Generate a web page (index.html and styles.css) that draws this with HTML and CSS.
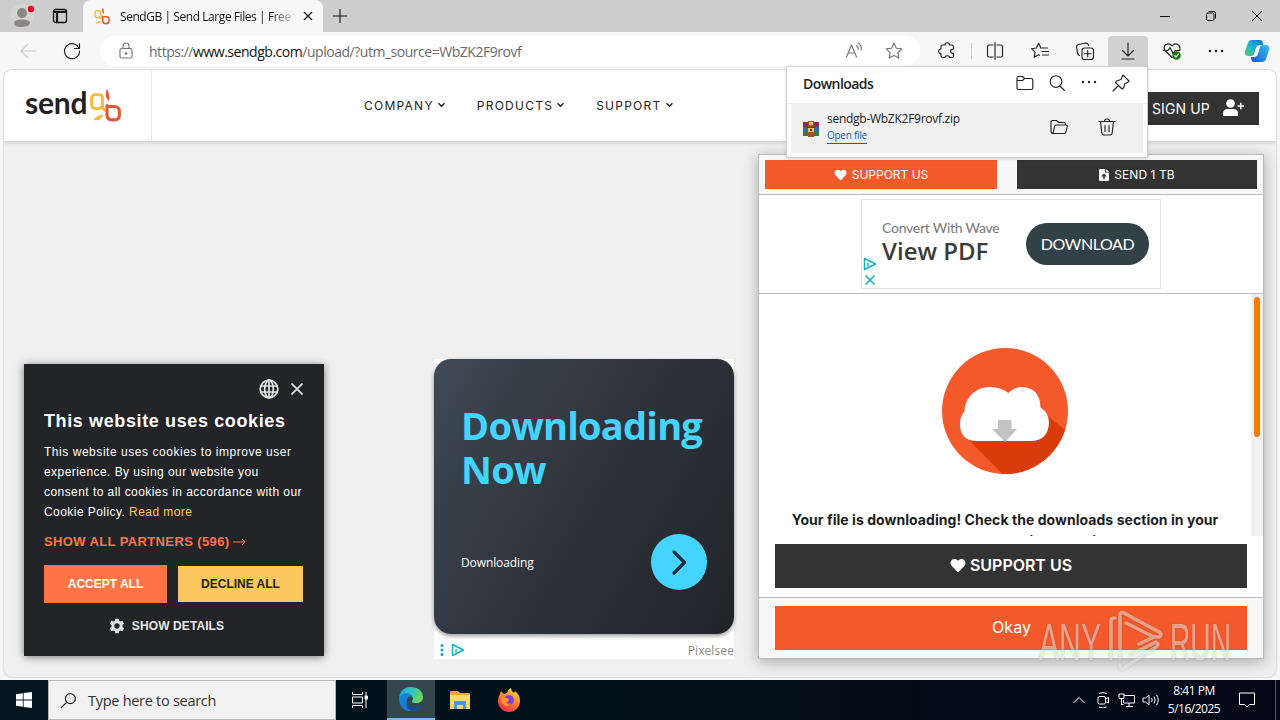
FILE: index.html
```html
<!DOCTYPE html>
<html lang="en">
<head>
  <meta charset="UTF-8">
  <meta name="viewport" content="width=device-width, initial-scale=1.0">
  <title>SendGB | Send Large Files | Free file transfer</title>
  <link rel="stylesheet" href="styles.css">
</head>
<body>
  <!-- shared logo mark -->
  <svg width="0" height="0" class="defs">
    <symbol id="gb" viewBox="0 0 32 33">
      <g fill="none" stroke-linecap="round" stroke-linejoin="round">
        <path d="M13 7.500V16q0 3 2 4.500M13 16q-1 3-4 3H6.500q-4 0-4-4V9.500q0-4 4-4h3q3.500 0 3.500 3" stroke="#fbb93a" stroke-width="2.800"/>
        <path d="M5.500 29.500q5 .5 7.500-4-4.500 1-7.500 4z" fill="#fbb93a" stroke="#fbb93a" stroke-width="1.500"/>
        <path d="M17.500 16v9q0 5 5 5h2q5 0 5-5v-3q0-5-5-5h-6" stroke="#e05a3a" stroke-width="3"/>
        <path d="M17.500 1.500q2 4 1.500 9-3-3-1.500-9z" fill="#e05a3a" stroke="#e05a3a" stroke-width="1.500"/>
      </g>
    </symbol>
    <symbol id="heart" viewBox="0 0 512 512">
      <path d="M462 62c-55-47-136-38-186 14l-20 20-20-20C186 24 105 15 50 62c-63 54-66 150-10 208l193 200c13 13 33 13 46 0l193-200c56-58 53-154-10-208z"/>
    </symbol>
    <symbol id="adchoice" viewBox="0 0 14 14">
      <path d="M1.500 1.500v11L12.500 7z" fill="none" stroke="#11b0c4" stroke-width="1.500" stroke-linejoin="round"/>
      <path d="M5 6v3.500" stroke="#11b0c4" stroke-width="1.500"/>
    </symbol>
  </svg>

  <div class="titlebar">
    <svg class="avatar" viewBox="0 0 30 30"><circle cx="15" cy="15" r="12" fill="#d6d2d0"/><circle cx="15" cy="12" r="5" fill="#8a8786"/><path d="M7 22q0-3.500 8-3.500t8 3.500-8 4-8-4z" fill="#8a8786"/><circle cx="24" cy="8" r="3.200" fill="#e00b1c"/></svg>
    <svg class="tab-actions" viewBox="0 0 16 16"><rect x="1.500" y="1.500" width="13" height="13" rx="2"/><path d="M2 4h12M5 4v10" stroke-width="2.200"/></svg>
    <div class="tab">
      <svg class="favicon"><use href="#gb"/></svg>
      <span class="tab-title">SendGB | Send Large Files | Free f</span>
      <svg class="tab-close" viewBox="0 0 10 10"><path d="M1 1l8 8M9 1l-8 8"/></svg>
    </div>
    <svg class="new-tab" viewBox="0 0 14 14"><path d="M7 0v14M0 7h14"/></svg>
    <div class="window-buttons">
      <svg viewBox="0 0 12 12"><path d="M1 6.500h10"/></svg>
      <svg viewBox="0 0 12 12"><rect x="1.500" y="3" width="7.500" height="7.500" rx="1.500"/><path d="M3.500 1.500h5q2 0 2 2v5"/></svg>
      <svg viewBox="0 0 12 12"><path d="M1 1l10 10M11 1L1 11"/></svg>
    </div>
  </div>

  <div class="toolbar">
    <svg class="icon back" viewBox="0 0 20 20"><path d="M18 10H3M9.500 3.500L3 10l6.500 6.500"/></svg>
    <svg class="icon reload" viewBox="0 0 20 20"><path d="M17 7.500A7.500 7.500 0 1 0 17.500 10M17.500 2.500v5h-5"/></svg>
    <div class="address">
      <svg class="icon lock" viewBox="0 0 20 20"><rect x="4" y="7.500" width="12" height="9.500" rx="1.500"/><path d="M7 7.500V5q0-3 3-3t3 3v2.500"/><circle cx="10" cy="12.500" r=".8" fill="#555"/></svg>
      <span class="url">https://<b>www.sendgb.com</b>/upload/?utm_source=WbZK2F9rovf</span>
      <svg class="icon read" viewBox="0 0 20 20"><path d="M2.500 16L7.500 4l5 12M4.300 12h6.400M12.500 4.500q2 1.500 1.700 4M14.500 2q3.500 3 2.700 7"/></svg>
      <svg class="icon star" viewBox="0 0 20 20"><path d="M10 2.200l2.400 5 5.400.7-4 3.800 1 5.400-4.800-2.600-4.800 2.600 1-5.400-4-3.800 5.400-.7z"/></svg>
    </div>
    <div class="tools">
      <svg class="icon" viewBox="0 0 20 20"><path d="M5.500 4H8q0-2.300 2.200-2.300T12.400 4H15q1.500 0 1.500 1.500V8q-3 0-3 2.200t3 2.200v2.600q0 1.500-1.500 1.500h-2.600q0-1.800-2.200-1.800T8 16.500H5.500Q4 16.500 4 15v-2.600q-2.300 0-2.300-2.200T4 8V5.500Q4 4 5.500 4z"/></svg>
      <i class="divider"></i>
      <svg class="icon" viewBox="0 0 20 20"><path d="M10 1.500v17M8 4H4Q2.500 4 2.500 5.500v9Q2.500 16 4 16h4M12 4h4q1.500 0 1.500 1.500v9q0 1.500-1.500 1.500h-4"/></svg>
      <svg class="icon" viewBox="0 0 20 20"><path d="M9.500 14.200L8.500 13.700 4.200 16.200l.9-5L1.500 7.700l4.900-.7L8.600 2.300 10.800 7h6.700M12 10.500h6.500M12.500 14h6"/></svg>
      <svg class="icon" viewBox="0 0 20 20"><rect x="7" y="7" width="11.500" height="11.500" rx="2.500"/><path d="M12.700 9.500v6.500M9.500 12.700h6.500M4.500 14.500Q3 14 2.500 12L1.500 6q0-2 2-2.500l7.500-1.500q2 0 2.500 2.500"/></svg>
      <span class="active-tool"><svg class="icon" viewBox="0 0 20 20"><path d="M10 2v13M4.500 9.500L10 15l5.500-5.500M4 18h12"/></svg></span>
      <svg class="icon" viewBox="0 0 20 20"><path d="M10 16.500L3 9.500Q1 6 3.500 4 7 1.500 10 5q3-3.500 6.500-1Q19 6.500 17.500 9M1 9.500h5l2-3 3 6 2-3h5"/><circle cx="14.500" cy="14.500" r="4.300" fill="#107c10" stroke="none"/><path d="M12.500 14.500l1.500 1.500 2.500-3" stroke="#fff"/></svg>
      <svg class="icon dots" viewBox="0 0 20 20"><circle cx="4" cy="10" r="1.300"/><circle cx="10" cy="10" r="1.300"/><circle cx="16" cy="10" r="1.300"/></svg>
    </div>
    <svg class="copilot" viewBox="0 0 26 26">
      <defs>
        <linearGradient id="c1" x1="1" y1="0" x2="0" y2="1"><stop offset="0" stop-color="#0d6fd6"/><stop offset=".5" stop-color="#1fb5cf"/><stop offset="1" stop-color="#55cf6c"/></linearGradient>
        <linearGradient id="c2" x1="1" y1="0" x2="0" y2="1"><stop offset="0" stop-color="#35c3f3"/><stop offset="1" stop-color="#1556d8"/></linearGradient>
      </defs>
      <path d="M8 2h8q3 0 3 5h-3q-3 0-4 3l-2 6q-.5 2-2.500 2H4Q0 18 1 13L4 5q1-3 4-3z" fill="url(#c1)"/>
      <path d="M18 24h-8q-3 0-3-5h3q3 0 4-3l2-7q.5-2 2.500-2H22q4 0 3 5l-3 9q-1 3-4 3z" fill="url(#c2)"/>
    </svg>
  </div>

  <div class="page">
    <header class="site-header">
      <a class="logo" href="#"><span>send</span><svg><use href="#gb"/></svg></a>
      <nav>
        <a href="#">COMPANY<svg viewBox="0 0 8 6"><path d="M1 1.200l3 3 3-3"/></svg></a>
        <a href="#">PRODUCTS<svg viewBox="0 0 8 6"><path d="M1 1.200l3 3 3-3"/></svg></a>
        <a href="#">SUPPORT<svg viewBox="0 0 8 6"><path d="M1 1.200l3 3 3-3"/></svg></a>
      </nav>
      <a class="signup" href="#">SIGN UP
        <svg viewBox="0 0 21 17"><circle cx="7.500" cy="4.500" r="4.300"/><path d="M0 17v-2.500Q0 10 5 10h5q5 0 5 4.500V17zM14.500 6.300h2.500V3.800h1.500v2.500H21v1.500h-2.500v2.500H17V7.800h-2.500z"/></svg>
      </a>
    </header>

    <div class="ad">
      <div class="ad-card">
        <h2>Downloading Now</h2>
        <div class="ad-row">
          <span>Downloading</span>
          <i class="ad-go"><svg viewBox="0 0 56 56"><path d="M23 18l10.500 10.500L23 39"/></svg></i>
        </div>
      </div>
      <div class="ad-foot">
        <svg class="ad-menu" viewBox="0 0 4 12"><circle cx="2" cy="1.500" r="1.500"/><circle cx="2" cy="6" r="1.500"/><circle cx="2" cy="10.500" r="1.500"/></svg>
        <svg class="ad-choice"><use href="#adchoice"/></svg>
        <span>Pixelsee</span>
      </div>
    </div>
  </div>

  <div class="cookie">
    <div class="cookie-top">
      <svg viewBox="0 0 20 20" class="globe"><circle cx="10" cy="10" r="8.800"/><ellipse cx="10" cy="10" rx="4.300" ry="8.800"/><path d="M10 1v18M1.500 7h17M1.500 13h17"/></svg>
      <svg viewBox="0 0 12 12" class="cookie-x"><path d="M.5.5l11 11M11.500.5l-11 11"/></svg>
    </div>
    <h3>This website uses cookies</h3>
    <p>
      <span class="first-line">This website uses cookies to improve user</span><br>
      experience. By using our website you<br>
      consent to all cookies in accordance with our<br>
      Cookie Policy. <a href="#">Read more</a>
    </p>
    <a class="partners" href="#">SHOW ALL PARTNERS (596) <svg viewBox="0 0 13 8"><path d="M0 4h12M9 1l3 3-3 3"/></svg></a>
    <div class="cookie-buttons">
      <button class="accept">ACCEPT ALL</button>
      <button class="decline">DECLINE ALL</button>
    </div>
    <div class="details">
      <svg viewBox="0 0 24 24"><path fill-rule="evenodd" d="M9.500 1h5l.6 3.200 2 1.100 3-1.100 2.600 4.300-2.500 2.100v2.800l2.500 2.100-2.600 4.300-3-1.100-2 1.100-.6 3.200h-5l-.6-3.200-2-1.100-3 1.100-2.600-4.300 2.500-2.100v-2.800L1.300 8.500l2.600-4.300 3 1.100 2-1.100zM12 8a4 4 0 1 0 0 8 4 4 0 0 0 0-8z"/></svg>
      SHOW DETAILS
    </div>
  </div>

  <div class="modal">
    <div class="modal-head">
      <button class="orange"><svg><use href="#heart"/></svg>SUPPORT US</button>
      <button class="dark"><svg viewBox="0 0 10 12"><path fill-rule="evenodd" d="M0 1q0-1 1-1h5v3.500h4V11q0 1-1 1H1q-1 0-1-1zM7 0l3 2.800H7zM5 4.500L2 7.500h2.200V10h1.600V7.500H8z"/></svg>SEND 1 TB</button>
    </div>
    <div class="modal-banner">
      <div class="banner">
        <div class="banner-icons">
          <svg><use href="#adchoice"/></svg>
          <svg viewBox="0 0 14 14"><path d="M2.500 2.500l9 9M11.500 2.500l-9 9" stroke="#11b0c4" stroke-width="1.500"/></svg>
        </div>
        <div class="banner-text"><small>Convert With Wave</small><strong>View PDF</strong></div>
        <span class="pill">DOWNLOAD</span>
      </div>
    </div>
    <div class="modal-body">
      <div class="modal-scroll">
        <svg class="cloud" viewBox="0 0 126 126">
          <defs><clipPath id="disc"><circle cx="63" cy="63" r="63"/></clipPath></defs>
          <circle cx="63" cy="63" r="63" fill="#f4592b"/>
          <path clip-path="url(#disc)" d="M104 67l26 20v44H65L27 92z" fill="#d93c0c"/>
          <path d="M35 93Q18 93 18 76q0-8 4.500-12.500C23 49 34 39 48 39q11 0 18.500 6Q72 39 80 39q18 1 18.500 20.500Q107 65 107 75q-1 17-17 18z" fill="#fff"/>
          <path d="M56 72h13.500v9H75L63 94 50 81h6z" fill="#c2c2c2"/>
        </svg>
        <p>Your file is downloading! Check the downloads section in your<br><span>to manage or resume, instance in use</span></p>
      </div>
      <div class="scrollbar"><i></i></div>
    </div>
    <div class="modal-support"><button class="dark"><svg><use href="#heart"/></svg>SUPPORT US</button></div>
    <div class="modal-foot"><button class="orange">Okay</button></div>
  </div>

  <div class="downloads">
    <div class="downloads-head">
      <strong>Downloads</strong>
      <svg class="icon" viewBox="0 0 20 20"><path d="M2 5q0-1.500 1.500-1.500h4L9.500 5.500H16q1.800 0 1.800 1.500v8q0 1.500-1.500 1.500h-13Q2 16.500 2 15zM2 7.500h5.500l2-2"/></svg>
      <svg class="icon" viewBox="0 0 20 20"><circle cx="9" cy="8.500" r="5.800"/><path d="M13 13l4.500 4.500"/></svg>
      <svg class="icon dots" viewBox="0 0 20 20"><circle cx="4" cy="9" r="1.200"/><circle cx="10" cy="9" r="1.200"/><circle cx="16" cy="9" r="1.200"/></svg>
      <svg class="icon" viewBox="0 0 20 20"><path d="M12 2l6 6-1.500 1.500-2.500 1-1.500 4.500-1.500 1L4.500 9.500l1-1.500L10 6.500l1-2.500zM7.500 12.500L2 18"/></svg>
    </div>
    <div class="download-item">
      <svg class="rar" viewBox="0 0 16 16"><path fill="#8d2a50" d="M0 1h16v5H0z"/><path fill="#3c62b0" d="M0 6h16v4H0z"/><path fill="#2f7d3c" d="M0 10h16v5H0z"/><path fill="#b34a1d" d="M5 0h6v16H5z"/><path fill="#e8c26a" d="M6 1h4v3H6zM5 7h6v4H5z"/><path fill="#6a3413" d="M7 8h2v2H7zM4 6h8v1H4z"/></svg>
      <div class="download-info"><span>sendgb-WbZK2F9rovf.zip</span><a href="#">Open file</a></div>
      <svg class="icon" viewBox="0 0 20 20"><path d="M4 16.500Q2 16.500 2 14.500V5q0-1.500 1.500-1.500h4l2 2H15q1.500 0 1.500 1.500v1M4 16.500L5.500 9.500q.3-1.500 2-1.500H17q1.500 0 1.200 1.500L17 15q-.3 1.500-2 1.500z"/></svg>
      <svg class="icon" viewBox="0 0 20 20"><path d="M2 4.500h16M7.500 4.500q0-2.500 2.500-2.500t2.500 2.500M3.500 4.500l1.300 11.500q.2 2 2 2h6.400q1.800 0 2-2l1.300-11.500M8 8.500v6M12 8.500v6"/></svg>
    </div>
  </div>

  <div class="taskbar">
    <svg class="start" viewBox="0 0 16 16"><path d="M0 2.200L6.800 1.200v6.400H0zM7.600 1.100L16 0v7.600H7.600zM0 8.400h6.800v6.400L0 13.800zM7.600 8.400H16V16l-8.400-1.100z"/></svg>
    <div class="search"><svg viewBox="0 0 18 18"><circle cx="11" cy="7" r="5.300"/><path d="M7 11L1 17"/></svg><span>Type here to search</span></div>
    <div class="task"><svg class="taskview" viewBox="0 0 16 16"><path d="M.5 0v2.500h10V0M.5 16v-2.500h10V16M.5 5h10v6H.5zM14 0v16"/><path d="M13 4h2.500v3H13z" fill="#fff"/></svg></div>
    <div class="task current">
      <svg viewBox="0 0 24 24">
        <defs><linearGradient id="e1" x1="0" y1="0" x2="1" y2=".3"><stop offset="0" stop-color="#1ba0e0"/><stop offset=".6" stop-color="#35c6c0"/><stop offset="1" stop-color="#62d957"/></linearGradient></defs>
        <path d="M0 12Q1 0 12 0t12 10q0 6-7 6-4 0-4-1.500 0-.8 1-2 .5-4-5-4.500Q3 8 0 12z" fill="url(#e1)"/>
        <path d="M0 12Q2 5.500 9 6.500q3.500.5 5 3Q9 8 8 13t5 8q3 1.500 7 .5-3 2.500-8 2.500Q1 24 0 12z" fill="#1680d8"/>
        <path d="M8.200 12q-1 7 5 8.500 5 1 9-3 .5 2-2 4-3 2.500-7.500 2.400Q5 22 8.200 12z" fill="#124c9e"/>
      </svg>
    </div>
    <div class="task">
      <svg viewBox="0 0 24 24"><path d="M2 4q0-1 1-1h7l2 2h9q1 0 1 1v15H2z" fill="#e9a821"/><path d="M2 7h20v14H2z" fill="#ffd766"/><path d="M6 13h12v8h-3v-4H9v4H6z" fill="#3e9be0"/></svg>
    </div>
    <div class="task">
      <svg viewBox="0 0 24 24">
        <defs><linearGradient id="f1" x1=".8" y1="0" x2=".3" y2="1"><stop offset="0" stop-color="#ffe03a"/><stop offset=".45" stop-color="#ff8a26"/><stop offset="1" stop-color="#f4264f"/></linearGradient></defs>
        <path d="M3 6l1-3 3 3 3-1q1-4 4-5 0 3 3 5l1-2q5 4 5 10a11 11 0 0 1-22 0Q1 9 3 6z" fill="url(#f1)"/>
        <path d="M8 9q4-4 8 0 2 5-1 7-4 2-7-1 3 0 4-2-4 0-4-4z" fill="#7a3fe0"/>
        <path d="M5 10q4-1 7 1-1 3-4 3 2 3 6 1-2 4-6 2.500T5 10z" fill="#ff9a2a"/>
      </svg>
    </div>
    <div class="tray">
      <svg viewBox="0 0 16 16"><path d="M2.500 11L8 5.500l5.500 5.500"/></svg>
      <svg viewBox="0 0 16 16"><rect x="3" y="4.500" width="7.500" height="7.500" rx="1.500"/><path d="M10.500 7l3-1.500v5.500l-3-1.500M4 1.500q4-2 7.500 0M4 15q4 2 7.500 0"/></svg>
      <svg class="wide" viewBox="0 0 18 16"><path d="M6 3.500h10.500v7.500H5.500V8M8 14.500h7M11 11v3.500M1 2h5v4.500H1zM3.500 6.500v6h2"/></svg>
      <svg class="wide" viewBox="0 0 18 16"><path d="M1 6h2.500L7 3v10L3.500 10H1zM9.500 6q1.500 2 0 4M12 4.500q2.500 3.500 0 7M14.500 3q3.500 5 0 10"/></svg>
      <div class="clock"><span>8:41 PM</span><span>5/16/2025</span></div>
      <svg class="note" viewBox="0 0 16 16"><path d="M.5 1h15v11.500h-5L8 15l-2.500-2.500h-5z"/></svg>
      <i class="show-desktop"></i>
    </div>
  </div>

  <svg class="watermark" viewBox="0 0 200 66">
    <text x="3" y="52" textLength="62" lengthAdjust="spacingAndGlyphs">ANY</text>
    <text x="134" y="52" textLength="61" lengthAdjust="spacingAndGlyphs">RUN</text>
    <g fill="none" stroke="#fff" stroke-opacity=".45" stroke-width="3.500" stroke-linecap="round" stroke-linejoin="round">
      <path d="M75 51V13q0-3 4-3"/>
      <path d="M84 50V8q0-5 4-3l35 19q4 3 0 5l-5 0L90 15M103 36l15-7M94 47l26-13q4 2 0 5L88 60q-4 2-4-3"/>
    </g>
  </svg>
</body>
</html>
```
FILE: styles.css
```css
* {
    box-sizing: border-box;
}

body {
    margin: 0;
    width: 1280px;
    height: 720px;
    overflow: hidden;
    position: relative;
    display: flex;
    flex-direction: column;
    background: #f7f7f7;
    font-family: "Open Sans", sans-serif;
    color: #222;
}

a {
    color: inherit;
    text-decoration: none;
}

button {
    border: none;
    padding: 0;
    font: inherit;
    color: #fff;
    display: flex;
    align-items: center;
    justify-content: center;
}

h2, h3, p {
    margin: 0;
}

svg {
    flex: none;
}

.defs {
    position: absolute;
}

/* Title bar */
.titlebar {
    height: 32px;
    flex: none;
    display: flex;
    align-items: center;
    background: #cdcdcd;
}

.avatar {
    width: 30px;
    height: 30px;
    margin-left: 7px;
}

.tab-actions {
    width: 16px;
    height: 16px;
    margin-left: 15px;
    fill: none;
    stroke: #111;
    stroke-width: 1.3;
}

.tab {
    width: 240px;
    height: 32px;
    margin-left: 15px;
    padding: 0 10px;
    border-radius: 8px 8px 0 0;
    background: #f7f7f7;
    display: flex;
    align-items: center;
}

.favicon {
    width: 18px;
    height: 17px;
}

.tab-title {
    width: 174px;
    margin-left: 9px;
    white-space: nowrap;
    font-size: 12px;
    letter-spacing: -0.44px;
    color: #111;
    -webkit-mask-image: linear-gradient(90deg, #000 150px, transparent 178px);
    mask-image: linear-gradient(90deg, #000 150px, transparent 178px);
}

.tab-close {
    width: 10px;
    height: 10px;
    margin-left: 9px;
    stroke: #111;
    stroke-width: 1.2;
}

.new-tab {
    width: 14px;
    height: 14px;
    margin-left: 10px;
    stroke: #111;
    stroke-width: 1.1;
}

.window-buttons {
    margin-left: auto;
    display: flex;
    gap: 34px;
    padding-right: 17px;
}

.window-buttons svg {
    width: 12px;
    height: 12px;
    fill: none;
    stroke: #111;
}

/* Toolbar */
.toolbar {
    height: 38px;
    flex: none;
    display: flex;
    align-items: center;
}

.icon {
    width: 20px;
    height: 20px;
    fill: none;
    stroke: #222;
    stroke-width: 1.15;
    stroke-linejoin: round;
    stroke-linecap: round;
}

.dots {
    fill: #222;
    stroke: none;
}

.back {
    margin-left: 18px;
    stroke: #c9c9c9;
}

.reload {
    margin-left: 24px;
}

.address {
    width: 820px;
    height: 30px;
    margin-left: 18px;
    padding: 0 16px;
    border-radius: 15px;
    background: #fff;
    display: flex;
    align-items: center;
}

.address .icon {
    stroke: #767676;
}

.url {
    margin-left: 13px;
    flex: 1;
    font-size: 14px;
    letter-spacing: -0.47px;
    color: #6b6b6b;
}

.url b {
    font-weight: 400;
    color: #111;
}

.address .star {
    margin-left: 20px;
}

.tools {
    margin-left: 17px;
    display: flex;
    align-items: center;
}

.divider {
    width: 1px;
    height: 16px;
    margin: 0 13px 0 14px;
    background: #cfcfcf;
}

.tools .icon + .icon {
    margin-left: 25px;
}

.active-tool {
    width: 40px;
    height: 31px;
    margin: 0 14px 0 13px;
    border-radius: 4px 4px 0 0;
    background: #d2d2d2;
    display: flex;
    align-items: center;
    justify-content: center;
}

.tools .icon + .dots {
    margin-left: 24px;
}

.copilot {
    width: 26px;
    height: 26px;
    margin-left: 18px;
}

/* Site */
.page {
    width: 1272px;
    height: 607px;
    flex: none;
    margin: 0 auto 3px;
    border-radius: 8px;
    background: #f0f0f0;
    overflow: hidden;
    box-shadow: 0 0 2px rgba(0, 0, 0, 0.35);
}

.site-header {
    height: 71px;
    background: #fff;
    display: flex;
    align-items: center;
    box-shadow: 0 1px 4px rgba(0, 0, 0, 0.2);
}

.logo {
    width: 148px;
    height: 71px;
    padding-left: 21px;
    border-right: 1px solid #e8e8e8;
    display: flex;
    align-items: center;
}

.logo span {
    width: 64px;
    margin-top: -7px;
    font-family: Lato, sans-serif;
    font-weight: 700;
    font-size: 30px;
    letter-spacing: -0.2px;
}

.logo svg {
    width: 33px;
    height: 34px;
}

nav {
    display: flex;
    margin: -1px 0 0 212px;
    font-family: Inter, sans-serif;
    font-size: 12px;
    letter-spacing: 1.25px;
}

nav a {
    display: flex;
    align-items: center;
    margin-right: 31px;
}

nav svg {
    width: 9px;
    height: 6px;
    margin-left: 3px;
    fill: none;
    stroke: #222;
    stroke-width: 1.5;
}

.signup {
    width: 130px;
    height: 33px;
    margin: 6px 17px 0 auto;
    padding: 0 15px 0 23px;
    background: #333;
    color: #fff;
    font-family: Inter, sans-serif;
    font-size: 14px;
    letter-spacing: 0.1px;
    display: flex;
    align-items: center;
    justify-content: space-between;
}

.signup svg {
    width: 21px;
    height: 17px;
    margin-top: -2px;
    fill: #fff;
}

/* Square ad */
.ad {
    width: 300px;
    height: 300px;
    margin: 218px 0 0 430px;
    background: #fff;
}

.ad-card {
    height: 275px;
    padding: 44px 27px 0;
    border-radius: 17px;
    background: linear-gradient(120deg, #3e4a55 0%, #30353d 45%, #212328 100%);
    box-shadow: 0 2px 4px rgba(0, 0, 0, 0.4);
}

.ad-card h2 {
    font-size: 38px;
    line-height: 44px;
    letter-spacing: -0.75px;
    color: #43d5ff;
}

.ad-row {
    margin-top: 43px;
    display: flex;
    align-items: center;
    justify-content: space-between;
    color: #fff;
    font-size: 12px;
    letter-spacing: -0.1px;
}

.ad-go {
    width: 56px;
    height: 56px;
    border-radius: 50%;
    background: #43d5ff;
}

.ad-go svg {
    width: 56px;
    height: 56px;
    fill: none;
    stroke: #1e2d3a;
    stroke-width: 3.2;
    stroke-linecap: round;
    stroke-linejoin: round;
}

.ad-foot {
    height: 25px;
    padding: 7px 0 0 6px;
    display: flex;
    align-items: center;
    color: #888;
    font-size: 12px;
}

.ad-menu {
    width: 4px;
    height: 12px;
    fill: #11a5b5;
}

.ad-choice {
    width: 14px;
    height: 14px;
    margin-left: 7px;
}

.ad-foot span {
    margin-left: auto;
    letter-spacing: 0.1px;
}

/* Cookie banner */
.cookie {
    position: absolute;
    left: 24px;
    top: 364px;
    width: 300px;
    height: 292px;
    padding: 15px 20px 0;
    background: #222427;
    color: #fff;
    font-family: "Liberation Sans", sans-serif;
    box-shadow: 0 1px 8px rgba(0, 0, 0, 0.5);
}

.cookie-top {
    display: flex;
    align-items: center;
    justify-content: flex-end;
    gap: 12px;
}

.cookie-top svg {
    fill: none;
    stroke: #e4e4e4;
    stroke-width: 1.7;
}

.globe {
    width: 20px;
    height: 20px;
}

.cookie-x {
    width: 12px;
    height: 12px;
    margin-right: 1px;
}

.cookie h3 {
    margin-top: 10px;
    font-size: 18px;
    line-height: 24px;
    letter-spacing: 0.62px;
    white-space: nowrap;
}

.cookie p {
    margin-top: 9px;
    font-size: 12px;
    line-height: 20px;
    letter-spacing: 0.44px;
    white-space: nowrap;
}

.first-line {
    letter-spacing: 0.54px;
}

.cookie p a {
    color: #fdc75f;
}

.partners {
    display: block;
    margin-top: 11px;
    font-size: 13px;
    line-height: 17px;
    font-weight: 700;
    letter-spacing: 0.38px;
    color: #ff7446;
}

.partners svg {
    width: 13px;
    height: 8px;
    fill: none;
    stroke: #ff7446;
}

.cookie-buttons {
    margin-top: 15px;
    display: flex;
    align-items: center;
    justify-content: space-between;
    margin-right: 1px;
    font-size: 12px;
    font-weight: 700;
    letter-spacing: 0.28px;
}

.accept {
    width: 123px;
    height: 38px;
    background: #ff7446;
}

.decline {
    width: 125px;
    height: 36px;
    background: #fdc75f;
    color: #222;
}

.details {
    margin-top: 15px;
    padding-right: 15px;
    display: flex;
    align-items: center;
    justify-content: center;
    font-size: 12px;
    font-weight: 700;
    letter-spacing: 0.1px;
    color: #e8e8e8;
}

.details svg {
    width: 16px;
    height: 16px;
    margin-right: 7px;
    fill: #e0e0e0;
}

/* Download modal */
.modal {
    position: absolute;
    left: 758px;
    top: 154px;
    width: 506px;
    height: 505px;
    border: 1px solid #bbb;
    background: #fff;
    font-family: Inter, sans-serif;
    box-shadow: 0 3px 14px rgba(0, 0, 0, 0.3);
}

.orange {
    background: #f4592b;
}

.dark {
    background: #333;
}

.modal-head {
    height: 40px;
    padding: 5px 6px 0;
    display: flex;
    justify-content: space-between;
    background: #f7f7f7;
    border-bottom: 1px solid #bbb;
    font-size: 12px;
}

.modal-head button {
    height: 29px;
}

.modal-head .orange {
    width: 232px;
}

.modal-head .dark {
    width: 240px;
    letter-spacing: 0.05px;
}

.modal-head svg {
    width: 13px;
    height: 12px;
    margin-right: 5px;
    fill: #fff;
}

.modal-head .dark svg {
    width: 10px;
    margin-right: 5px;
}

.modal-banner {
    height: 99px;
    padding: 4px 0 0 102px;
    border-bottom: 1px solid #bbb;
}

.banner {
    width: 300px;
    height: 90px;
    border: 1px solid #e2e2e2;
    display: flex;
    align-items: center;
}

.banner-icons {
    width: 20px;
    padding: 0 0 1px 1px;
    align-self: flex-end;
    display: flex;
    flex-direction: column;
    gap: 2px;
}

.banner-icons svg {
    width: 14px;
    height: 14px;
}

.banner-text {
    width: 144px;
    margin-top: -2px;
    display: flex;
    flex-direction: column;
    font-family: Lato, sans-serif;
    color: #3c3c3c;
}

.banner-text small {
    font-size: 14px;
    line-height: 16px;
    letter-spacing: -0.25px;
    color: #777;
}

.banner-text strong {
    font-family: "Open Sans", sans-serif;
    font-weight: 600;
    font-size: 24px;
    line-height: 30px;
}

.pill {
    width: 123px;
    height: 42px;
    border-radius: 21px;
    background: #324047;
    color: #fff;
    font-family: Lato, sans-serif;
    font-size: 16px;
    line-height: 41px;
    letter-spacing: -0.4px;
    text-align: center;
}

.modal-body {
    height: 242px;
    display: flex;
}

.modal-scroll {
    width: 492px;
    overflow: hidden;
    text-align: center;
}

.cloud {
    display: block;
    width: 126px;
    height: 126px;
    margin: 54px auto 35px;
}

.modal-scroll p {
    font-size: 14px;
    font-weight: 700;
    line-height: 21px;
    letter-spacing: 0.05px;
    white-space: nowrap;
    color: #1c1e22;
}

.scrollbar {
    width: 12px;
    padding: 3px;
    background: #f0f0f0;
}

.scrollbar i {
    display: block;
    width: 6px;
    height: 140px;
    border-radius: 3px;
    background: #f57c00;
}

.modal-support {
    height: 62px;
    padding: 8px 16px;
    border-bottom: 1px solid #bbb;
}

.modal-support button {
    width: 472px;
    height: 44px;
    padding-bottom: 2px;
    font-size: 16px;
    font-weight: 600;
    letter-spacing: -0.03px;
}

.modal-support svg {
    width: 16px;
    height: 15px;
    margin-right: 4px;
    fill: #fff;
}

.modal-foot {
    height: 60px;
    padding: 8px 16px;
    background: #f7f7f7;
}

.modal-foot button {
    width: 472px;
    height: 44px;
    padding: 0 0 2px 1px;
    font-size: 16px;
}

/* Downloads flyout */
.downloads {
    position: absolute;
    left: 786px;
    top: 66px;
    width: 362px;
    height: 92px;
    border: 1px solid #d0d0d0;
    background: #fff;
    box-shadow: 0 1px 3px rgba(0, 0, 0, 0.15);
}

.downloads-head {
    height: 37px;
    padding: 0 16px 4px 16px;
    display: flex;
    align-items: center;
    gap: 12px;
    border-bottom: 1px solid #ececec;
}

.downloads-head strong {
    flex: 1;
    font-size: 14px;
    font-weight: 600;
    letter-spacing: -0.55px;
}

.download-item {
    height: 49px;
    margin: 0 4px;
    padding: 0 26px 3px 12px;
    display: flex;
    align-items: center;
    background: #f0f0f0;
}

.rar {
    width: 16px;
    height: 16px;
    margin-top: 3px;
}

.download-info {
    flex: 1;
    margin-left: 8px;
    display: flex;
    flex-direction: column;
    align-items: flex-start;
    font-size: 12px;
    line-height: 17px;
    letter-spacing: -0.27px;
}

.download-info a {
    margin-top: 1px;
    font-size: 10px;
    line-height: 15px;
    color: #0f5ea8;
    border-bottom: 1px solid #0f5ea8;
}

.download-item .icon + .icon {
    margin-left: 28px;
}

/* Taskbar */
.taskbar {
    height: 40px;
    flex: none;
    display: flex;
    align-items: center;
    background: linear-gradient(90deg, #02161f, #020e18 60%, #030817);
    color: #fff;
}

.start {
    width: 16px;
    height: 16px;
    margin: 0 16px;
    fill: #fff;
}

.search {
    width: 288px;
    height: 40px;
    padding: 0 11px;
    border: 1px solid #b5b5b5;
    background: #f1f1f1;
    display: flex;
    align-items: center;
    gap: 11px;
    color: #333;
    font-size: 14.5px;
    letter-spacing: -0.28px;
}

.search svg {
    width: 17px;
    height: 17px;
    fill: none;
    stroke: #222;
    stroke-width: 1.3;
}

.task {
    width: 49px;
    height: 40px;
    display: flex;
    align-items: center;
    justify-content: center;
}

.task svg {
    width: 24px;
    height: 24px;
}

.task .taskview {
    width: 16px;
    height: 16px;
    fill: none;
    stroke: #fff;
}

.search + .task {
    width: 51px;
    padding-right: 3px;
}

.task.current {
    width: 48px;
    background: #34474f;
    border-bottom: 2px solid #76b9ed;
}

.tray {
    height: 40px;
    margin-left: auto;
    display: flex;
    align-items: center;
    gap: 8px;
}

.tray svg {
    width: 16px;
    height: 16px;
    fill: none;
    stroke: #fff;
}

.tray .wide {
    width: 18px;
    margin: 0 -1px;
}

.clock {
    width: 54px;
    display: flex;
    flex-direction: column;
    align-items: center;
    font-size: 12px;
    line-height: 18px;
    letter-spacing: -0.5px;
}

.tray .note {
    margin-left: 10px;
}

.show-desktop {
    width: 5px;
    height: 40px;
    margin-left: 12px;
    border-left: 1px solid #4a5560;
}

.watermark {
    position: absolute;
    left: 1036px;
    top: 608px;
    width: 200px;
    height: 66px;
    overflow: visible;
    filter: drop-shadow(0 0 1px rgba(80, 80, 80, 0.55));
}

.watermark text {
    font-family: "Liberation Sans", sans-serif;
    font-size: 52px;
    fill: #fff;
    fill-opacity: 0.45;
}
```
